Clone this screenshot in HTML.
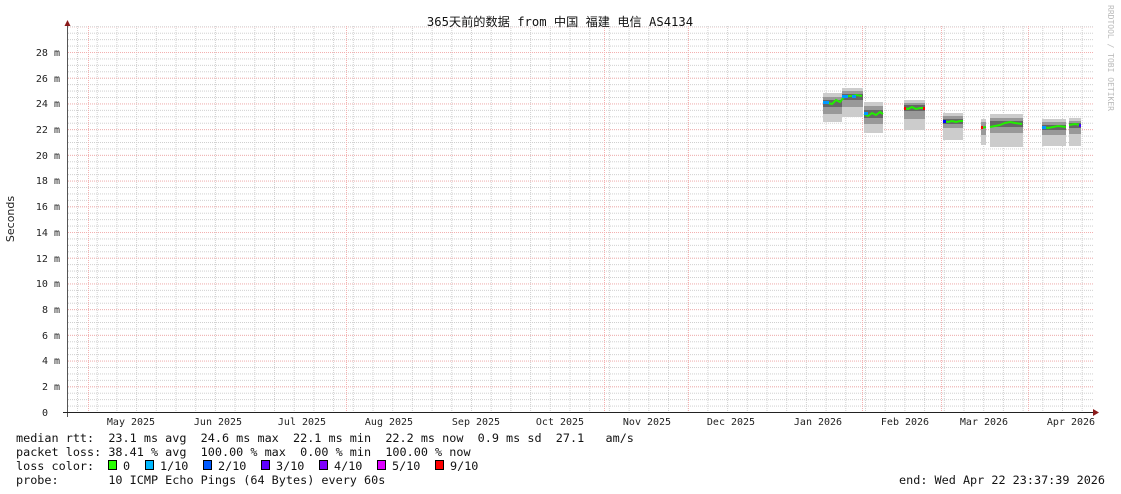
<!DOCTYPE html>
<html><head><meta charset="utf-8"><style>
html,body{margin:0;padding:0;background:#fff;}
svg{display:block}
.m{font-family:"DejaVu Sans Mono","Liberation Mono",monospace;}
text{white-space:pre}
</style></head><body>
<svg width="1121" height="494" viewBox="0 0 1121 494" xmlns="http://www.w3.org/2000/svg">
<defs>
<pattern id="hmin" patternUnits="userSpaceOnUse" x="0" y="412" width="2" height="6.4286"><rect x="0" y="0" width="1" height="1" fill="#d0d0d0"/></pattern>
<pattern id="vmin" patternUnits="userSpaceOnUse" x="77" y="0" width="19.7" height="2"><rect x="0" y="0" width="1" height="1" fill="#d0d0d0"/></pattern>
<pattern id="hmaj" patternUnits="userSpaceOnUse" x="0" y="412" width="2" height="25.714"><rect x="0" y="0" width="1" height="1" fill="#f4b0b0"/></pattern>
</defs>
<rect width="1121" height="494" fill="#fff"/>
<rect x="68" y="26" width="1025" height="386" fill="url(#hmin)"/>
<rect x="68" y="26" width="1025" height="386" fill="url(#vmin)"/>
<rect x="68" y="27" width="1025" height="386" fill="url(#hmaj)"/>
<g stroke="#f4b0b0" stroke-width="1" stroke-dasharray="1,1">
<line x1="88.5" y1="26" x2="88.5" y2="412"/>
<line x1="346.5" y1="26" x2="346.5" y2="412"/>
<line x1="604.5" y1="26" x2="604.5" y2="412"/>
<line x1="688.5" y1="26" x2="688.5" y2="412"/>
<line x1="862.5" y1="26" x2="862.5" y2="412"/>
<line x1="941.5" y1="26" x2="941.5" y2="412"/>
<line x1="1028.5" y1="26" x2="1028.5" y2="412"/>
</g>
<g>
<rect x="823" y="93" width="19" height="29" fill="#ccc"/><rect x="823" y="97" width="19" height="17" fill="#999"/><rect x="823" y="100" width="19" height="7" fill="#666"/>
<rect x="842" y="88" width="21" height="29" fill="#ccc"/><rect x="842" y="91" width="21" height="16" fill="#999"/><rect x="842" y="94" width="21" height="6" fill="#666"/>
<rect x="864" y="102" width="19" height="31" fill="#ccc"/><rect x="864" y="106" width="19" height="18" fill="#999"/><rect x="864" y="110" width="19" height="8" fill="#666"/>
<rect x="904" y="100" width="21" height="30" fill="#ccc"/><rect x="904" y="103" width="21" height="16" fill="#999"/><rect x="904" y="105" width="21" height="6" fill="#666"/>
<rect x="943" y="113" width="20" height="27" fill="#ccc"/><rect x="943" y="116" width="20" height="12" fill="#999"/><rect x="943" y="119" width="20" height="5" fill="#666"/>
<rect x="981" y="119" width="5" height="26" fill="#ccc"/><rect x="981" y="122" width="5" height="13" fill="#999"/>
<rect x="990" y="114" width="33" height="33" fill="#ccc"/><rect x="990" y="118" width="33" height="15" fill="#999"/><rect x="990" y="121" width="33" height="6" fill="#666"/>
<rect x="1042" y="119" width="24" height="27" fill="#ccc"/><rect x="1042" y="122" width="24" height="13" fill="#999"/><rect x="1042" y="125" width="24" height="5" fill="#666"/>
<rect x="1069" y="118" width="12" height="28" fill="#ccc"/><rect x="1069" y="121" width="12" height="13" fill="#999"/><rect x="1069" y="123" width="12" height="5" fill="#666"/>
<g fill="none" stroke="#22ee00" stroke-width="2">
<polyline points="823,102 828,103 832,104 836,100 840,102 844,97 848,96 852,96 856,95 862,96"/>
<polyline points="864,114 868,116 872,113 876,115 880,112 883,114"/>
<polyline points="904,108 908,109 912,107 916,109 920,108 925,108"/>
<polyline points="943,121 948,122 952,121 956,122 960,121 963,121"/>
<polyline points="981,128 986,127"/>
<polyline points="990,127 995,126 1000,125 1005,123 1010,122 1015,123 1022,124"/>
<polyline points="1042,127 1048,128 1053,127 1058,126 1066,127"/>
<polyline points="1069,125 1075,124 1081,125"/>
</g>
<rect x="823" y="101" width="6" height="3" fill="#0099ff"/><rect x="842" y="95" width="6" height="3" fill="#0099ff"/><rect x="852" y="95" width="4" height="3" fill="#0099ff"/>
<rect x="864" y="112" width="4" height="3" fill="#0099ff"/><rect x="943" y="120" width="3" height="3" fill="#0000ff"/>
<rect x="981" y="126" width="2" height="3" fill="#ff0000"/><rect x="1042" y="126" width="4" height="3" fill="#0099ff"/><rect x="1079" y="124" width="2" height="3" fill="#4400ff"/>
<rect x="904" y="107" width="2" height="3" fill="#ff0000"/><rect x="923" y="107" width="2" height="3" fill="#ff0000"/>
</g>
<line x1="67.5" y1="24" x2="67.5" y2="417" stroke="#555"/>
<line x1="63" y1="412.5" x2="1094" y2="412.5" stroke="#222"/>
<polygon points="64.5,26 67.5,20 70.5,26" fill="#8b1a1a"/>
<polygon points="1093,409 1099,412.5 1093,416" fill="#8b1a1a"/>
<g class="m" font-size="10" fill="#222" text-anchor="end">
<text x="60" y="56">28 m</text><text x="60" y="82">26 m</text><text x="60" y="107">24 m</text><text x="60" y="133">22 m</text>
<text x="60" y="159">20 m</text><text x="60" y="184">18 m</text><text x="60" y="210">16 m</text><text x="60" y="236">14 m</text>
<text x="60" y="262">12 m</text><text x="60" y="287">10 m</text><text x="60" y="313">8 m</text><text x="60" y="339">6 m</text>
<text x="60" y="364">4 m</text><text x="60" y="390">2 m</text><text x="48" y="416">0</text>
</g>
<g class="m" font-size="10" fill="#222" text-anchor="middle">
<text x="131" y="425">May 2025</text><text x="218" y="425">Jun 2025</text><text x="302" y="425">Jul 2025</text>
<text x="389" y="425">Aug 2025</text><text x="476" y="425">Sep 2025</text><text x="560" y="425">Oct 2025</text>
<text x="647" y="425">Nov 2025</text><text x="731" y="425">Dec 2025</text><text x="818" y="425">Jan 2026</text>
<text x="905" y="425">Feb 2026</text><text x="984" y="425">Mar 2026</text><text x="1071" y="425">Apr 2026</text>
</g>
<text x="14" y="219" transform="rotate(-90 14 219)" text-anchor="middle" font-family="DejaVu Sans,Liberation Sans,sans-serif" font-size="11" fill="#222">Seconds</text>
<text x="560" y="26" text-anchor="middle" font-family="DejaVu Sans Mono,Liberation Mono,Noto Sans CJK SC,monospace" font-size="12.2" fill="#111">365天前的数据 from 中国 福建 电信 AS4134</text>
<text x="1108" y="5" transform="rotate(90 1108 5)" class="m" font-size="8" fill="#bbb">RRDTOOL / TOBI OETIKER</text>
<g class="m" font-size="11.8" fill="#111">
<text x="16" y="442">median rtt:  23.1 ms avg  24.6 ms max  22.1 ms min  22.2 ms now  0.9 ms sd  27.1   am/s</text>
<text x="16" y="456">packet loss: 38.41 % avg  100.00 % max  0.00 % min  100.00 % now</text>
<text x="16" y="470">loss color:</text>
<text x="16" y="484">probe:       10 ICMP Echo Pings (64 Bytes) every 60s</text>
<text x="1105" y="484" text-anchor="end">end: Wed Apr 22 23:37:39 2026</text>
<text x="123" y="470">0</text><text x="160" y="470">1/10</text><text x="218" y="470">2/10</text><text x="276" y="470">3/10</text>
<text x="334" y="470">4/10</text><text x="392" y="470">5/10</text><text x="450" y="470">9/10</text>
</g>
<g stroke="#000" stroke-width="1">
<rect x="108.5" y="460.5" width="8" height="9" fill="#26ff00"/>
<rect x="145.5" y="460.5" width="8" height="9" fill="#00b8ff"/>
<rect x="203.5" y="460.5" width="8" height="9" fill="#0059ff"/>
<rect x="261.5" y="460.5" width="8" height="9" fill="#5e00ff"/>
<rect x="319.5" y="460.5" width="8" height="9" fill="#7e00ff"/>
<rect x="377.5" y="460.5" width="8" height="9" fill="#dd00ff"/>
<rect x="435.5" y="460.5" width="8" height="9" fill="#ff0000"/>
</g>
</svg>
</body></html>
